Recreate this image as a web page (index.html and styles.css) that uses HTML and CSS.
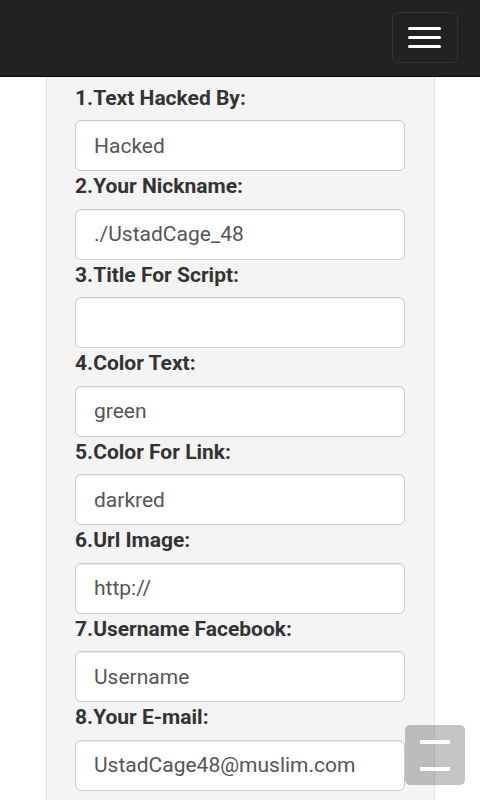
FILE: index.html
```html
<!DOCTYPE html>
<html lang="en">
<head>
<meta charset="utf-8">
<title>Script Generator</title>
<link rel="stylesheet" href="styles.css">
</head>
<body>
<header class="navbar">
  <button class="navbar-toggle" type="button" aria-label="Toggle navigation">
    <span class="icon-bar"></span>
    <span class="icon-bar"></span>
    <span class="icon-bar"></span>
  </button>
</header>
<main class="page">
  <form class="well">
    <div class="form-group">
      <label>1.Text Hacked By:</label>
      <input class="form-control" type="text" value="Hacked">
    </div>
    <div class="form-group">
      <label>2.Your Nickname:</label>
      <input class="form-control" type="text" value="./UstadCage_48">
    </div>
    <div class="form-group">
      <label>3.Title For Script:</label>
      <input class="form-control" type="text" value="">
    </div>
    <div class="form-group">
      <label>4.Color Text:</label>
      <input class="form-control" type="text" value="green">
    </div>
    <div class="form-group">
      <label>5.Color For Link:</label>
      <input class="form-control" type="text" value="darkred">
    </div>
    <div class="form-group">
      <label>6.Url Image:</label>
      <input class="form-control" type="text" value="http://">
    </div>
    <div class="form-group">
      <label>7.Username Facebook:</label>
      <input class="form-control" type="text" value="Username">
    </div>
    <div class="form-group">
      <label>8.Your E-mail:</label>
      <input class="form-control" type="text" value="UstadCage48@muslim.com">
    </div>
  </form>
</main>
<a class="scroll-top" href="#" aria-label="Back to top">
  <span class="scroll-bar"></span>
  <span class="scroll-bar"></span>
</a>
</body>
</html>
```
FILE: styles.css
```css
html, body {
  margin: 0;
  padding: 0;
  height: 100%;
  overflow: hidden;
  background: #fff;
  font-family: Roboto, "Liberation Sans", Arial, sans-serif;
}

.navbar {
  box-sizing: border-box;
  height: 76.5px;
  background: #222222;
  border-bottom: 1.5px solid #080808;
  display: flex;
  justify-content: flex-end;
  align-items: flex-start;
  padding: 12px 22.5px 0 0;
}

.navbar-toggle {
  box-sizing: border-box;
  width: 66px;
  height: 51px;
  padding: 13.5px 15px;
  background: transparent;
  border: 1.5px solid #333333;
  border-radius: 6px;
  display: flex;
  flex-direction: column;
  gap: 6px;
  cursor: pointer;
}

.icon-bar {
  display: block;
  width: 33px;
  height: 3px;
  border-radius: 1.5px;
  background: #ffffff;
}

.page {
  display: flex;
  justify-content: center;
}

.well {
  box-sizing: border-box;
  width: 389px;
  margin: 0;
  padding: 6px 28.5px 28.5px;
  background: #f4f4f4;
  border: 1.5px solid #e3e3e3;
  border-top: none;
  display: flex;
  flex-direction: column;
}

.form-group {
  display: flex;
  flex-direction: column;
}

.form-group label {
  display: block;
  font-size: 21px;
  line-height: 30px;
  font-weight: 700;
  color: #333333;
  margin-bottom: 7.5px;
}

.form-control {
  box-sizing: border-box;
  display: block;
  width: 100%;
  height: 51px;
  margin: 0;
  padding: 9px 18px;
  font-family: Roboto, "Liberation Sans", Arial, sans-serif;
  font-size: 21px;
  line-height: 30px;
  color: #555555;
  background: #ffffff;
  border: 1.5px solid #cccccc;
  border-radius: 6px;
  box-shadow: inset 0 1px 1px rgba(0, 0, 0, 0.075);
  outline: none;
}

.scroll-top {
  position: fixed;
  right: 15px;
  bottom: 15px;
  width: 60px;
  height: 60px;
  border-radius: 5px;
  background: rgba(0, 0, 0, 0.23);
  display: flex;
  flex-direction: column;
  align-items: center;
  justify-content: center;
  gap: 23px;
}

.scroll-bar {
  display: block;
  width: 30px;
  height: 4px;
  background: #ffffff;
}
```
